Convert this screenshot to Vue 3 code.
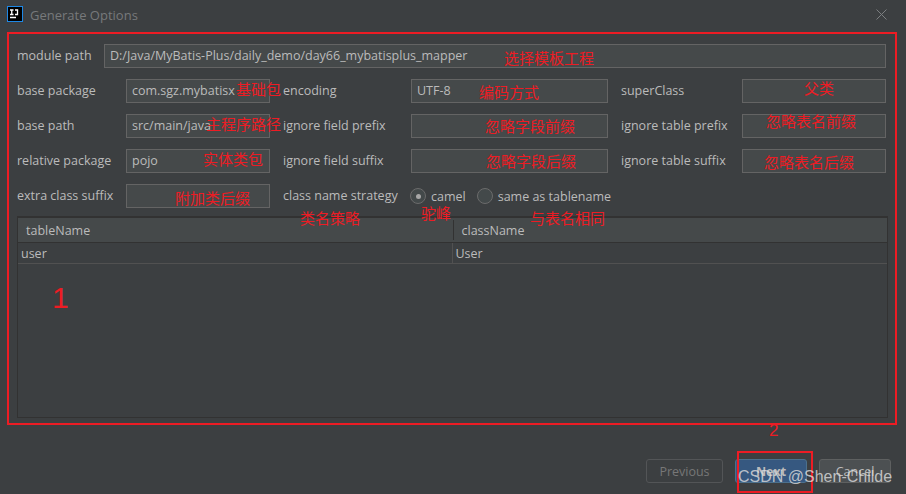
<script setup>
const rows = [
  [
    { label: "base package", value: "com.sgz.mybatisx" },
    { label: "encoding", value: "UTF-8" },
    { label: "superClass", value: "" },
  ],
  [
    { label: "base path", value: "src/main/java" },
    { label: "ignore field prefix", value: "" },
    { label: "ignore table prefix", value: "" },
  ],
  [
    { label: "relative package", value: "pojo" },
    { label: "ignore field suffix", value: "" },
    { label: "ignore table suffix", value: "" },
  ],
];

// Annotations drawn over the screenshot
const notes = [
  { text: "选择模板工程", x: 504, y: 50, size: 15 },
  { text: "基础包", x: 236, y: 81, size: 15 },
  { text: "编码方式", x: 479, y: 84, size: 15 },
  { text: "父类", x: 804, y: 80, size: 15 },
  { text: "主程序路径", x: 206, y: 116, size: 15 },
  { text: "忽略字段前缀", x: 485, y: 118, size: 15 },
  { text: "忽略表名前缀", x: 766, y: 113, size: 15 },
  { text: "实体类包", x: 203, y: 151, size: 15 },
  { text: "忽略字段后缀", x: 486, y: 153, size: 15 },
  { text: "忽略表名后缀", x: 764, y: 154, size: 15 },
  { text: "附加类后缀", x: 175, y: 190, size: 15 },
  { text: "类名策略", x: 300, y: 210, size: 15 },
  { text: "驼峰", x: 421, y: 205, size: 15 },
  { text: "与表名相同", x: 530, y: 210, size: 15 },
  { text: "1", x: 52, y: 280, size: 30 },
  { text: "2", x: 769, y: 421, size: 17 },
];
</script>

<template>
  <div class="dialog">
    <header class="titlebar">
      <svg class="logo" width="16" height="16" viewBox="0 0 16 16">
        <rect x="0.5" y="0.5" width="15" height="15" fill="#000" stroke="#1e88e5" />
        <path d="M3 4h3.5M4.75 4v4.5M3 8.5h3.5M8 4h3.2M10.5 4v4.5H8M3 11.5h6" fill="none" stroke="#fff" stroke-width="1.3" />
      </svg>
      <span class="title">Generate Options</span>
      <svg class="close" width="11" height="11" viewBox="0 0 11 11">
        <path d="M.5.5l10 10M10.5.5l-10 10" fill="none" stroke="#7c7f81" />
      </svg>
    </header>

    <main class="body">
      <div class="module-row">
        <label class="module-label">module path</label>
        <div class="input">D:/Java/MyBatis-Plus/daily_demo/day66_mybatisplus_mapper</div>
      </div>

      <div class="form">
        <template v-for="(row, r) in rows" :key="r">
          <template v-for="(f, i) in row" :key="f.label">
            <label :class="['label', { inset: i > 0 }]">{{ f.label }}</label>
            <div class="input">{{ f.value }}</div>
          </template>
        </template>

        <label class="label">extra class suffix</label>
        <div class="input"></div>
        <label class="label inset">class name strategy</label>
        <div class="radios">
          <span class="radio on"></span>
          <span class="radio-text">camel</span>
          <span class="radio"></span>
          <span class="radio-text">same as tablename</span>
        </div>
      </div>

      <div class="table">
        <div class="thead">
          <div class="th">tableName</div>
          <div class="th second">className</div>
        </div>
        <div class="tr">
          <div class="td">user</div>
          <div class="td second">User</div>
        </div>
      </div>
    </main>

    <footer class="footer">
      <button class="btn disabled">Previous</button>
      <button class="btn primary">Next</button>
      <button class="btn cancel">Cancel</button>
    </footer>

    <!-- red marks pasted on top of the screenshot -->
    <div class="frame main-frame"></div>
    <div class="frame next-frame"></div>
    <span
      v-for="n in notes"
      :key="n.text"
      class="note"
      :style="{ left: n.x + 'px', top: n.y + 'px', fontSize: n.size + 'px' }"
    >{{ n.text }}</span>
    <span class="watermark">CSDN @Shen-Childe</span>
  </div>
</template>

<style>
html,
body {
  margin: 0;
  background: #3c3f41;
}
</style>

<style scoped>
.dialog {
  position: relative;
  width: 906px;
  height: 494px;
  overflow: hidden;
  background: #3c3f41;
  color: #bbbbbb;
  font-family: "Open Sans", "Noto Sans", sans-serif;
  font-size: 12.5px;
  display: flex;
  flex-direction: column;
}

.titlebar {
  height: 30px;
  display: flex;
  align-items: center;
  padding: 0 19px 0 7px;
  flex: none;
}
.logo {
  margin-right: 7px;
  margin-top: -2px;
}
.title {
  color: #77797b;
  font-size: 13px;
  flex: 1;
}
.close {
  margin-top: -2px;
}

.body {
  flex: 1;
  padding: 14px 18px 0 17px;
  display: flex;
  flex-direction: column;
}

.module-row {
  display: flex;
  width: 869px;
  height: 24px;
  margin-bottom: 11px;
}
.module-label {
  width: 87px;
  line-height: 23px;
}
.module-row .input {
  flex: 1;
}

.form {
  display: grid;
  width: 869px;
  grid-template-columns: 109px 144px 141px 197px 134px 144px;
  grid-auto-rows: 24px;
  row-gap: 11px;
}
.label {
  line-height: 23px;
  white-space: nowrap;
}
.label.inset {
  padding-left: 13px;
}

.input {
  box-sizing: border-box;
  height: 24px;
  line-height: 21px;
  padding: 0 5px;
  background: #45494a;
  border: 1px solid #646464;
  white-space: nowrap;
  overflow: hidden;
}

.radios {
  grid-column: span 3;
  display: flex;
  align-items: center;
  margin-left: -1px;
}
.radio {
  box-sizing: border-box;
  width: 16px;
  height: 16px;
  border-radius: 50%;
  border: 1px solid #6b6b6b;
  background: #43494a;
  display: flex;
  align-items: center;
  justify-content: center;
}
.radio.on::after {
  content: "";
  width: 5px;
  height: 5px;
  border-radius: 50%;
  background: #a7a7a7;
}
.radio-text {
  margin: 0 11px 0 5px;
}

.table {
  width: 871px;
  height: 202px;
  margin-top: 8px;
  box-sizing: border-box;
  border: 1px solid #323232;
  border-top-width: 2px;
}
.thead {
  display: flex;
  height: 25px;
  background: #45494a;
  border-bottom: 1px solid #323232;
  box-sizing: border-box;
}
.th {
  width: 435px;
  line-height: 25px;
  padding-left: 8px;
  box-sizing: border-box;
}
.th.second {
  border-left: 1px solid #323232;
  margin: 2px 0;
  line-height: 21px;
}
.tr {
  display: flex;
  height: 20px;
  border-bottom: 1px solid #515151;
}
.td {
  width: 434px;
  padding-left: 3px;
  box-sizing: border-box;
  line-height: 21px;
}
.td.second {
  border-left: 1px solid #515151;
  width: 436px;
}

.footer {
  height: 69px;
  flex: none;
  display: flex;
  justify-content: flex-end;
  padding: 34px 15px 0 0;
  box-sizing: border-box;
  gap: 12px;
}
.btn {
  width: 72px;
  height: 24px;
  box-sizing: border-box;
  border: 1px solid #5e6060;
  border-radius: 3px;
  background: #3c3f41;
  color: #bbbbbb;
  font: inherit;
  padding: 0;
}
.btn.disabled {
  width: 77px;
  color: #777777;
  border-color: #535557;
}
.btn.primary {
  background: #365880;
  border-color: #4c708c;
  font-weight: 700;
}
.btn.cancel {
  background: #4c5052;
}

.frame {
  position: absolute;
  box-sizing: border-box;
  border: 2px solid #ed1c24;
}
.main-frame {
  left: 7px;
  top: 32px;
  width: 890px;
  height: 393px;
}
.next-frame {
  left: 737px;
  top: 451px;
  width: 76px;
  height: 42px;
}

.note {
  position: absolute;
  color: #ed1c24;
  line-height: 1.2;
  white-space: nowrap;
  font-family: "Liberation Sans", "Noto Sans CJK SC", sans-serif;
}

.watermark {
  position: absolute;
  left: 738px;
  top: 468px;
  font-family: "Liberation Sans", sans-serif;
  font-size: 16px;
  color: rgba(222, 222, 222, 0.8);
  white-space: nowrap;
}
</style>
